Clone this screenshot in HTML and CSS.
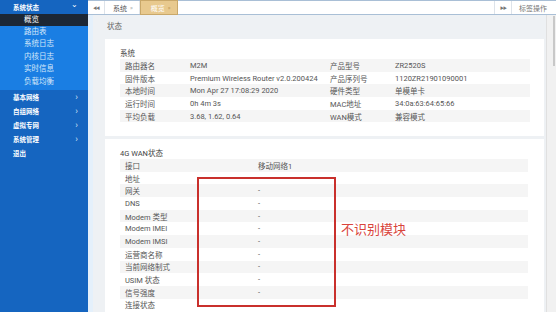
FILE: index.html
```html
<!DOCTYPE html>
<html lang="zh">
<head>
<meta charset="utf-8">
<link rel="stylesheet" href="styles.css">
</head>
<body>
<div class="app">
  <aside class="sidebar">
    <div class="nav-top open"><span>系统状态</span><span class="chev">&#8964;</span></div>
    <div class="nav-active">概览</div>
    <div class="submenu">
      <div class="sub">路由表</div>
      <div class="sub">系统日志</div>
      <div class="sub">内核日志</div>
      <div class="sub">实时信息</div>
      <div class="sub">负载均衡</div>
    </div>
    <div class="nav-top"><span>基本网络</span><span class="arr">&#8250;</span></div>
    <div class="nav-top"><span>自组网络</span><span class="arr">&#8250;</span></div>
    <div class="nav-top"><span>虚拟专网</span><span class="arr">&#8250;</span></div>
    <div class="nav-top"><span>系统管理</span><span class="arr">&#8250;</span></div>
    <div class="nav-top"><span>退出</span></div>
  </aside>
  <div class="strip"></div>
  <div class="main">
    <div class="topbar">
      <div class="tb-btn">&#9664;&#9664;</div>
      <div class="tab">系统 <span class="x">&#187;</span></div>
      <div class="tab active">概览 <span class="x">&#187;</span></div>
      <div class="tb-fill"></div>
      <div class="tb-btn right">&#9654;&#9654;</div>
      <div class="tb-ops">标签操作</div>
    </div>
    <div class="body">
      <div class="content">
        <div class="page-title">状态</div>
        <div class="card card1">
          <div class="card-title">系统</div>
          <table class="grid four">
            <tr><td>路由器名</td><td>M2M</td><td>产品型号</td><td>ZR2520S</td></tr>
            <tr><td>固件版本</td><td>Premium Wireless Router v2.0.200424</td><td>产品序列号</td><td>1120ZR21901090001</td></tr>
            <tr><td>本地时间</td><td>Mon Apr 27 17:08:29 2020</td><td>硬件类型</td><td>单模单卡</td></tr>
            <tr><td>运行时间</td><td>0h 4m 3s</td><td>MAC地址</td><td>34:0a:63:64:65:66</td></tr>
            <tr><td>平均负载</td><td>3.68, 1.62, 0.64</td><td>WAN模式</td><td>兼容模式</td></tr>
          </table>
        </div>
        <div class="card card2">
          <div class="card-title">4G WAN状态</div>
          <table class="grid two">
            <tr><td>接口</td><td>移动网络1</td></tr>
            <tr><td>地址</td><td>-</td></tr>
            <tr><td>网关</td><td>-</td></tr>
            <tr><td>DNS</td><td>-</td></tr>
            <tr><td>Modem 类型</td><td>-</td></tr>
            <tr><td>Modem IMEI</td><td>-</td></tr>
            <tr><td>Modem IMSI</td><td>-</td></tr>
            <tr><td>运营商名称</td><td>-</td></tr>
            <tr><td>当前网络制式</td><td>-</td></tr>
            <tr><td>USIM 状态</td><td>-</td></tr>
            <tr><td>信号强度</td><td>-</td></tr>
            <tr><td>连接状态</td><td></td></tr>
          </table>
        </div>
      </div>
      <div class="scrollbar"><div class="thumb"></div></div>
    </div>
  </div>
</div>
<div class="mark-box"></div>
<div class="mark-text">不识别模块</div>
</body>
</html>
```
FILE: styles.css
```css
html, body {
  margin: 0;
  padding: 0;
}
body {
  width: 556px;
  height: 312px;
  overflow: hidden;
  font-family: Roboto, "Noto Sans CJK SC", sans-serif;
  position: relative;
  background: #eef1f4;
}
.app {
  display: flex;
  height: 312px;
}
.sidebar {
  width: 88px;
  flex: none;
  background: #1565c0;
  color: #fff;
}
.nav-top {
  height: 14px;
  display: flex;
  align-items: center;
  justify-content: space-between;
  padding: 0 10px 0 13px;
  font-size: 6.5px;
  font-weight: bold;
}
.nav-top.open {
  background: #1565c0;
}
.chev {
  font-size: 8px;
  line-height: 8px;
  margin-top: -4px;
  font-weight: normal;
}
.arr {
  font-size: 9px;
  font-weight: normal;
  color: #cfe0f5;
}
.nav-active {
  height: 12px;
  background: #1c2735;
  font-size: 7.5px;
  line-height: 12px;
  padding-left: 24px;
  color: #fff;
}
.submenu {
  background: #1a7ee3;
  padding-bottom: 2px;
}
.sub {
  height: 12.4px;
  line-height: 12.4px;
  font-size: 7.5px;
  padding-left: 24px;
  color: #d4e7fa;
}
.strip {
  width: 5px;
  flex: none;
  background: #e4f0fb;
}
.main {
  flex: 1;
  display: flex;
  flex-direction: column;
  min-width: 0;
}
.topbar {
  flex: none;
  display: flex;
  background: #fff;
  border-top: 1px solid #a9bfd6;
  border-bottom: 1px solid #a9bfd6;
  box-sizing: border-box;
  height: 15px;
  font-size: 7px;
  color: #555;
  margin-left: -5px;
}
.tb-btn {
  width: 16px;
  display: flex;
  align-items: center;
  justify-content: center;
  font-size: 4px;
  color: #777;
  letter-spacing: -1px;
  border-right: 1px solid #dde3ea;
}
.tb-btn.right {
  border-right: none;
  border-left: 1px solid #dde3ea;
}
.tab {
  display: flex;
  align-items: center;
  padding: 0 6px 0 8px;
  gap: 3px;
  border-right: 1px solid #e2e6ea;
}
.tab .x {
  font-size: 6px;
  color: #999;
}
.tab.active {
  background: #e8c98e;
  color: #fff;
  border: 1px solid #c9a86a;
  margin-top: -1px;
  margin-bottom: -1px;
  padding: 0 6px 0 10px;
}
.tab.active .x {
  color: #b8924f;
}
.tb-fill {
  flex: 1;
}
.tb-ops {
  width: 37px;
  display: flex;
  align-items: center;
  padding-left: 7px;
  border-left: 1px solid #dde3ea;
  color: #777;
  font-size: 7px;
  white-space: nowrap;
  overflow: hidden;
}
.body {
  flex: 1;
  display: flex;
  min-height: 0;
}
.content {
  flex: 1;
  padding: 0 2px 0 12px;
  min-width: 0;
}
.page-title {
  height: 24px;
  line-height: 24px;
  font-size: 7.5px;
  color: #666;
  padding-left: 2px;
}
.card {
  background: #fff;
  padding: 0 15px;
}
.card1 {
  height: 97px;
  margin-bottom: 3px;
}
.card2 {
  height: 180px;
}
.card-title {
  font-size: 7.5px;
  color: #444;
  padding-top: 9px;
  height: 11px;
  line-height: 11px;
}
.grid {
  border-collapse: collapse;
  width: 410px;
  font-size: 7.5px;
  color: #555;
}
.grid td {
  height: 12.7px;
  padding: 0 0 0 5px;
  white-space: nowrap;
}
.grid tr:nth-child(odd) td {
  background: #f5f5f5;
}
.four td:nth-child(1) { width: 60px; }
.four td:nth-child(2) { width: 135px; }
.four td:nth-child(3) { width: 60px; }
.four td:nth-child(4) { width: 135px; }
.two {
  width: 408px;
}
.two td:nth-child(1) { width: 128px; }
.scrollbar {
  width: 9px;
  flex: none;
  background: #f1f1f1;
  border-left: 1px solid #e0e0e0;
  position: relative;
}
.thumb {
  position: absolute;
  top: 1px;
  right: 1px;
  width: 2px;
  height: 50px;
  background: #c8c8c8;
}
.mark-box {
  position: absolute;
  left: 197px;
  top: 177px;
  width: 135px;
  height: 126px;
  border: 2px solid #c9302c;
}
.mark-text {
  position: absolute;
  left: 341px;
  top: 220px;
  font-size: 13px;
  line-height: 18px;
  color: #d9453c;
  font-family: "Noto Sans CJK SC", sans-serif;
}
```
